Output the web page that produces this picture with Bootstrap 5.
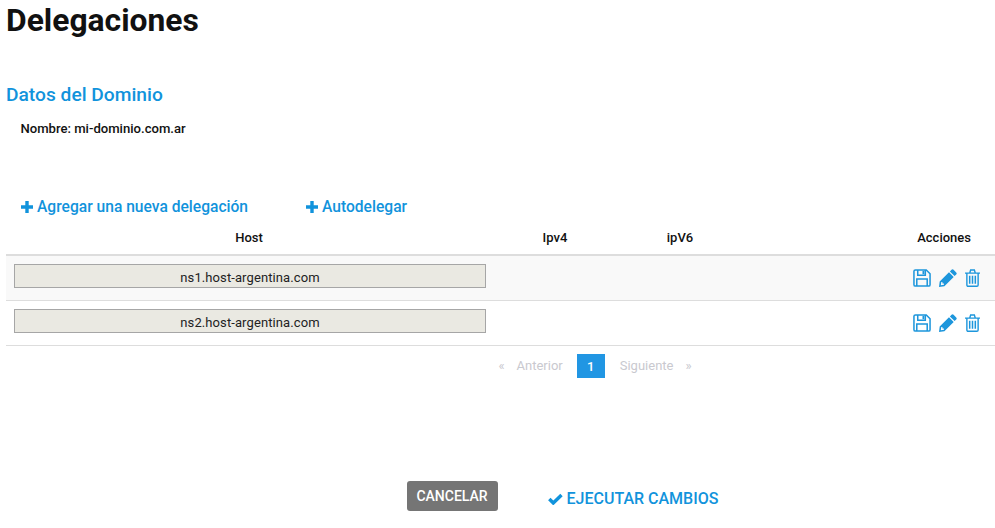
<!DOCTYPE html>
<html lang="es">
<head>
  <meta charset="UTF-8">
  <meta name="viewport" content="width=device-width, initial-scale=1.0">
  <link rel="stylesheet" href="https://cdn.jsdelivr.net/npm/bootstrap@5.3.6/dist/css/bootstrap.min.css">
  <script src="https://cdn.jsdelivr.net/npm/bootstrap@5.3.6/dist/js/bootstrap.bundle.min.js"></script>
  <style>
    body { font-family: Roboto, sans-serif; font-size: 13px; color: #111; background: #fff; overflow: hidden; }
    .page-wrap { padding-left: 6px; height: 528px; }
    .page-title { font-size: 31.8px; line-height: 40px; font-weight: 700; color: #111; margin: 0; height: 38px; }
    .sub-title { font-size: 19.2px; line-height: 22px; font-weight: 500; color: #1193dc; margin: 46px 0 0; }
    .domain-line { font-size: 13.1px; line-height: 16px; font-weight: 500; margin: 15px 0 0 14.5px; color: #111; }
    .add-links { margin: 61px 0 0 15px; gap: 58px; height: 19px; }
    .add-links a { font-size: 15.6px; line-height: 19px; font-weight: 500; color: #1193dc; text-decoration: none; display: flex; align-items: center; gap: 4px; }
    .add-links svg { margin-top: -2px; }
    .deleg-table { table-layout: fixed; width: 989px; margin: 3px 0 0; }
    .deleg-table th { font-size: 13px; font-weight: 500; line-height: 16px; padding: 10px 8px 8px; text-align: center; border-bottom: 2px solid #ddd; color: #111; }
    .deleg-table th.col-host { padding-right: 10px; }
    .deleg-table td { padding: 8px; height: 45px; border-bottom: 1px solid #ddd; vertical-align: top; color: #111; }
    .deleg-table tr.odd-row td { background: #f9f9f9; --bs-table-accent-bg: transparent; }
    .deleg-table th.col-actions { text-align: right; padding-right: 24px; }
    .host-field { display: block; width: 472px; height: 24px; background: #eae9e2; border: 1px solid #a6a6a6; text-align: center; font-size: 13px; line-height: 25px; color: #222; letter-spacing: .1px; }
    .row-actions { gap: 8px; padding: 5px 7px 0 0; }
    .row-actions svg { display: block; color: #1d96dc; }
    .pager { margin: 8px 0 0; height: 24px; padding-left: 189px; }
    .pager .page-text { font-size: 13px; color: #c9c9cf; line-height: 28px; }
    .pager .page-now { background: #2196e3; color: #fff; width: 28px; height: 24px; line-height: 25px; text-align: center; font-size: 13px; font-weight: 500; margin: 0 15px 0 14px; }
    .form-actions { margin-top: 103px; padding-left: 124px; gap: 50px; }
    .btn-cancel { background: #757575; color: #fff; font-size: 14px; font-weight: 500; border: 0; border-radius: 3px; height: 30px; width: 91px; padding: 2px 0 0; }
    .btn-run { font-size: 16px; font-weight: 500; color: #1193dc; text-decoration: none; display: flex; align-items: center; gap: 4px; margin-top: 6px; }
  </style>
  <title>Delegaciones</title>
</head>
<body>
  <div class="page-wrap">
    <h1 class="page-title">Delegaciones</h1>
    <h2 class="sub-title">Datos del Dominio</h2>
    <p class="domain-line">Nombre: mi-dominio.com.ar</p>

    <div class="add-links d-flex">
      <a href="#"><svg width="12" height="12" viewBox="0 0 12 12"><path fill="currentColor" d="M4.300 0h3.400v4.300H12v3.400H7.700V12H4.300V7.700H0V4.300h4.300z"/></svg>Agregar una nueva delegación</a>
      <a href="#"><svg width="12" height="12" viewBox="0 0 12 12"><path fill="currentColor" d="M4.300 0h3.400v4.300H12v3.400H7.700V12H4.300V7.700H0V4.300h4.300z"/></svg>Autodelegar</a>
    </div>

    <table class="table deleg-table">
      <colgroup><col style="width:488px"><col style="width:122px"><col style="width:128px"><col></colgroup>
      <thead>
        <tr><th class="col-host">Host</th><th>Ipv4</th><th>ipV6</th><th class="col-actions">Acciones</th></tr>
      </thead>
      <tbody id="rows"></tbody>
    </table>

    <div class="pager d-flex justify-content-center align-items-center">
      <span class="page-text me-2">«</span>
      <span class="page-text ms-1">Anterior</span>
      <span class="page-now">1</span>
      <span class="page-text me-2">Siguiente</span>
      <span class="page-text ms-1">»</span>
    </div>

    <div class="form-actions d-flex justify-content-center align-items-center">
      <button class="btn btn-cancel" type="button">CANCELAR</button>
      <a class="btn-run" href="#"><svg width="15" height="12" viewBox="0 0 15 12"><path fill="none" stroke="currentColor" stroke-width="3.400" d="M1.300 6l4 4 8.200-8"/></svg>EJECUTAR CAMBIOS</a>
    </div>
  </div>

  <script>
    const icons = `
      <svg width="18" height="18" viewBox="0 0 19 19"><path fill="none" stroke="currentColor" stroke-width="1.600" d="M2.500 1h11.500l4 4v11.500a1.500 1.500 0 0 1-1.500 1.500h-14a1.500 1.500 0 0 1-1.500-1.500v-14a1.500 1.500 0 0 1 1.500-1.500z"/><path fill="none" stroke="currentColor" stroke-width="1.600" d="M5 1v5.500h8V1M4 18v-7.500h11V18"/><path fill="currentColor" d="M10 2h2v3.500h-2z"/></svg>
      <svg width="18" height="18" viewBox="0 0 18 18"><path fill="currentColor" d="M12.500.8a1.500 1.500 0 0 1 2.100 0l2.600 2.600a1.500 1.500 0 0 1 0 2.100l-1.600 1.600-4.700-4.700zM10 3.300l4.700 4.700-9.300 9.300L0 18l.7-5.400zM2.300 13l-.5 3.200 3.200-.5-.1-1.200-1.400-.1-.1-1.400z"/></svg>
      <svg width="15" height="18" viewBox="0 0 16 19"><path fill="none" stroke="currentColor" stroke-width="1.500" d="M0 4.300h16M2 4.300v12.700a1.300 1.300 0 0 0 1.300 1.300h9.400a1.300 1.300 0 0 0 1.300-1.300V4.300M5 4.300L6 1h4l1 3.300"/><path fill="none" stroke="currentColor" stroke-width="1.600" d="M5 7v8.500M8 7v8.500M11 7v8.500"/></svg>`;
    const hosts = ["ns1.host-argentina.com", "ns2.host-argentina.com"];
    document.getElementById("rows").innerHTML = hosts.map((h, i) => `
      <tr class="${i % 2 == 0 ? 'odd-row' : ''}">
        <td><span class="host-field">${h}</span></td>
        <td></td>
        <td></td>
        <td><div class="row-actions d-flex justify-content-end align-items-center">${icons}</div></td>
      </tr>`).join("");
  </script>
</body>
</html>
